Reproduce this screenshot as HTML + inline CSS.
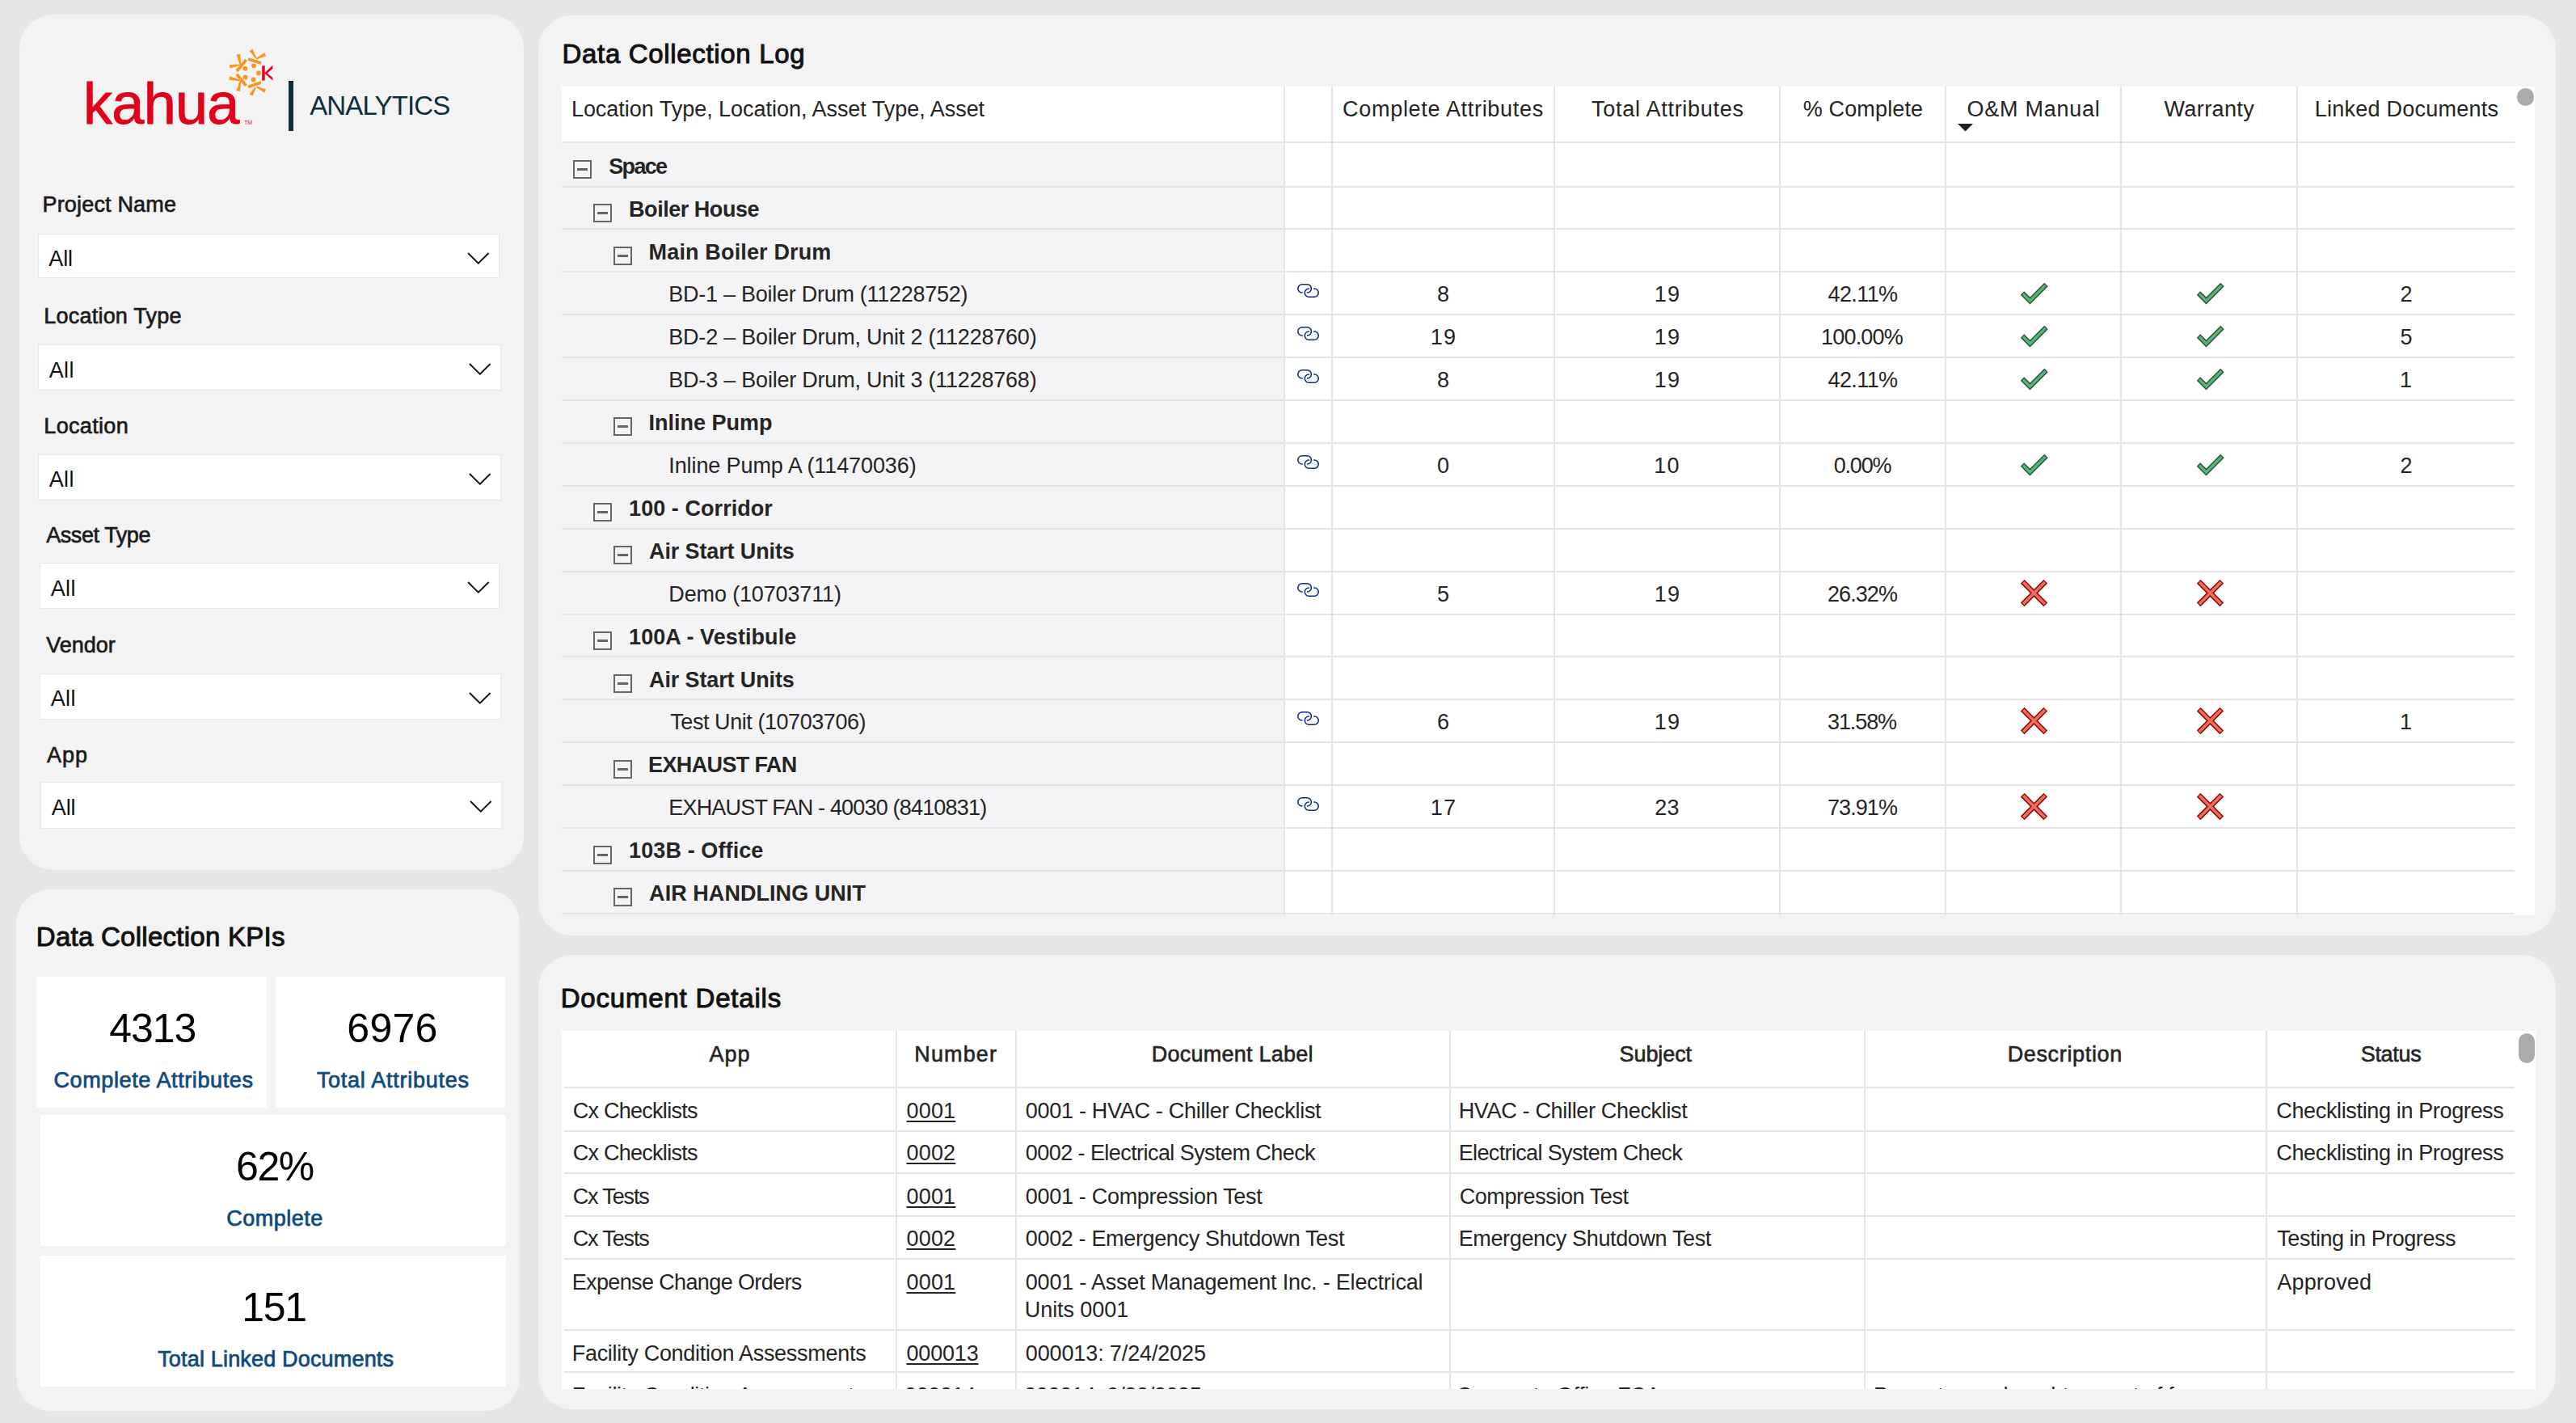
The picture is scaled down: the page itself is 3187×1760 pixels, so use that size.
<!DOCTYPE html>
<html><head><meta charset="utf-8"><title>Kahua Analytics - Data Collection</title>
<style>
html,body{margin:0;padding:0;}
body{width:3187px;height:1760px;background:#E6E6E6;position:relative;overflow:hidden;font-family:"Liberation Sans", sans-serif;}
.t{position:absolute;white-space:nowrap;}
.r{position:absolute;}
</style></head><body>
<div class="r" style="left:24.00px;top:18.00px;width:624.00px;height:1058.00px;background:#F3F3F3;border-radius:42px;"></div>
<div class="r" style="left:20.00px;top:1100.00px;width:623.00px;height:645.00px;background:#F3F3F3;border-radius:42px;"></div>
<div class="r" style="left:666.00px;top:19.00px;width:2496.00px;height:1138.00px;background:#F3F3F3;border-radius:42px;"></div>
<div class="r" style="left:666.00px;top:1181.00px;width:2496.00px;height:562.00px;background:#F3F3F3;border-radius:42px;"></div>
<div class="t" id="kahua" style="top:92.15px;font-size:72px;line-height:72px;font-weight:400;color:#E2001A;letter-spacing:-0.700px;left:103.00px;-webkit-text-stroke:0.9px #E2001A;">kahua</div>
<div class="t" style="left:302px;top:148px;font-size:7px;line-height:7px;color:#E2001A;">TM</div>
<svg class="r" style="left:280px;top:58px;width:62px;height:64px" viewBox="280 58 62 64"><line x1="307" y1="73" x2="323" y2="78" stroke="#F8961E" stroke-width="3.6"/><line x1="293" y1="88" x2="304.5" y2="74" stroke="#F8961E" stroke-width="3.6"/><line x1="293" y1="92" x2="304.5" y2="106" stroke="#F8961E" stroke-width="3.6"/><line x1="307" y1="107.5" x2="323" y2="102" stroke="#F8961E" stroke-width="3.6"/><polygon points="308.57,63.35 315.93,71.94 317.27,71.06 312.43,60.85" fill="#F8961E"/><polygon points="327.19,65.14 316.65,71.98 317.35,73.42 329.21,69.26" fill="#F8961E"/><polygon points="292.65,67.66 296.72,80.16 298.28,79.84 297.15,66.74" fill="#F8961E"/><polygon points="284.68,84.57 296.53,81.09 296.27,79.51 283.92,80.03" fill="#F8961E"/><polygon points="283.25,98.63 296.21,100.28 296.59,98.72 284.35,94.17" fill="#F8961E"/><polygon points="297.15,113.06 298.28,100.16 296.72,99.84 292.65,112.14" fill="#F8961E"/><polygon points="312.47,118.79 316.68,108.91 315.32,108.09 308.53,116.41" fill="#F8961E"/><polygon points="329.20,110.53 317.95,106.78 317.25,108.22 327.20,114.67" fill="#F8961E"/><circle cx="314" cy="81.3" r="2.9" fill="#F8961E"/><circle cx="303.5" cy="84.8" r="2.9" fill="#F8961E"/><circle cx="320" cy="90.4" r="2.9" fill="#F8961E"/><circle cx="303.5" cy="95.4" r="2.9" fill="#F8961E"/><circle cx="313.6" cy="98.4" r="2.9" fill="#F8961E"/><rect x="324.2" y="81.3" width="3.5" height="18.2" fill="#E2001A"/><path d="M327.2,90.4 L337.3,80.8 L337.3,85 L330.5,90.6 L337.3,96 L337.3,99.5 Z" fill="#E2001A"/></svg>
<div class="r" style="left:357.20px;top:100.30px;width:5.60px;height:61.70px;background:#0D2E3A;"></div>
<div class="t" id="analytics" style="top:114.27px;font-size:33px;line-height:33px;font-weight:400;color:#0B2F3C;letter-spacing:-0.866px;left:383.20px;">ANALYTICS</div>
<div class="t" id="flab0" style="top:240.14px;font-size:27px;line-height:27px;font-weight:400;color:#1A1A1A;letter-spacing:0.176px;left:52.50px;-webkit-text-stroke:0.65px #1A1A1A;">Project Name</div>
<div class="r" style="left:46.70px;top:288.70px;width:571.80px;height:55.70px;background:#FFFFFF;box-sizing:border-box;border:1px solid #E8E8E8;"></div>
<div class="t" id="fall0" style="top:307.04px;font-size:27px;line-height:27px;font-weight:400;color:#111111;letter-spacing:-0.100px;left:60.30px;">All</div>
<svg class="r" style="left:578.0px;top:310.7px;width:30px;height:18px" viewBox="0 0 30 18"><polyline points="1,2 13.8,14.6 26.6,2" fill="none" stroke="#111" stroke-width="1.9"/></svg>
<div class="t" id="flab1" style="top:378.44px;font-size:27px;line-height:27px;font-weight:400;color:#1A1A1A;letter-spacing:0.214px;left:54.30px;-webkit-text-stroke:0.65px #1A1A1A;">Location Type</div>
<div class="r" style="left:47.30px;top:426.20px;width:573.00px;height:57.20px;background:#FFFFFF;box-sizing:border-box;border:1px solid #E8E8E8;"></div>
<div class="t" id="fall1" style="top:444.54px;font-size:27px;line-height:27px;font-weight:400;color:#111111;letter-spacing:0.400px;left:60.70px;">All</div>
<svg class="r" style="left:579.8px;top:448.2px;width:30px;height:18px" viewBox="0 0 30 18"><polyline points="1,2 13.8,14.6 26.6,2" fill="none" stroke="#111" stroke-width="1.9"/></svg>
<div class="t" id="flab2" style="top:513.54px;font-size:27px;line-height:27px;font-weight:400;color:#1A1A1A;letter-spacing:0.324px;left:54.30px;-webkit-text-stroke:0.65px #1A1A1A;">Location</div>
<div class="r" style="left:47.30px;top:561.50px;width:573.00px;height:57.20px;background:#FFFFFF;box-sizing:border-box;border:1px solid #E8E8E8;"></div>
<div class="t" id="fall2" style="top:579.84px;font-size:27px;line-height:27px;font-weight:400;color:#111111;letter-spacing:0.400px;left:60.70px;">All</div>
<svg class="r" style="left:579.8px;top:583.5px;width:30px;height:18px" viewBox="0 0 30 18"><polyline points="1,2 13.8,14.6 26.6,2" fill="none" stroke="#111" stroke-width="1.9"/></svg>
<div class="t" id="flab3" style="top:648.74px;font-size:27px;line-height:27px;font-weight:400;color:#1A1A1A;letter-spacing:-0.428px;left:57.20px;-webkit-text-stroke:0.65px #1A1A1A;">Asset Type</div>
<div class="r" style="left:49.30px;top:696.20px;width:569.20px;height:56.50px;background:#FFFFFF;box-sizing:border-box;border:1px solid #E8E8E8;"></div>
<div class="t" id="fall3" style="top:714.54px;font-size:27px;line-height:27px;font-weight:400;color:#111111;letter-spacing:0.400px;left:62.70px;">All</div>
<svg class="r" style="left:578.0px;top:718.2px;width:30px;height:18px" viewBox="0 0 30 18"><polyline points="1,2 13.8,14.6 26.6,2" fill="none" stroke="#111" stroke-width="1.9"/></svg>
<div class="t" id="flab4" style="top:785.14px;font-size:27px;line-height:27px;font-weight:400;color:#1A1A1A;letter-spacing:0.020px;left:57.20px;-webkit-text-stroke:0.65px #1A1A1A;">Vendor</div>
<div class="r" style="left:49.30px;top:833.00px;width:570.70px;height:56.50px;background:#FFFFFF;box-sizing:border-box;border:1px solid #E8E8E8;"></div>
<div class="t" id="fall4" style="top:851.34px;font-size:27px;line-height:27px;font-weight:400;color:#111111;letter-spacing:0.400px;left:62.70px;">All</div>
<svg class="r" style="left:579.5px;top:855.0px;width:30px;height:18px" viewBox="0 0 30 18"><polyline points="1,2 13.8,14.6 26.6,2" fill="none" stroke="#111" stroke-width="1.9"/></svg>
<div class="t" id="flab5" style="top:920.54px;font-size:27px;line-height:27px;font-weight:400;color:#1A1A1A;letter-spacing:1.000px;left:58.00px;-webkit-text-stroke:0.65px #1A1A1A;">App</div>
<div class="r" style="left:50.20px;top:967.20px;width:571.00px;height:57.40px;background:#FFFFFF;box-sizing:border-box;border:1px solid #E8E8E8;"></div>
<div class="t" id="fall5" style="top:985.54px;font-size:27px;line-height:27px;font-weight:400;color:#111111;letter-spacing:-0.100px;left:63.80px;">All</div>
<svg class="r" style="left:580.7px;top:989.2px;width:30px;height:18px" viewBox="0 0 30 18"><polyline points="1,2 13.8,14.6 26.6,2" fill="none" stroke="#111" stroke-width="1.9"/></svg>
<div class="t" id="kpititle" style="top:1142.07px;font-size:33px;line-height:33px;font-weight:400;color:#111111;letter-spacing:0.263px;left:44.80px;-webkit-text-stroke:1.0px #111111;">Data Collection KPIs</div>
<div class="r" style="left:45.00px;top:1208.00px;width:284.60px;height:162.00px;background:#FFFFFF;"></div>
<div class="t" id="knum0" style="top:1247.17px;font-size:50px;line-height:50px;font-weight:400;color:#000000;letter-spacing:-1.032px;left:-11.30px;width:400px;text-align:center;">4313</div>
<div class="t" id="klab0" style="top:1323.14px;font-size:27px;line-height:27px;font-weight:400;color:#0F4A7E;letter-spacing:0.597px;left:-60.00px;width:500px;text-align:center;-webkit-text-stroke:0.75px #0F4A7E;">Complete Attributes</div>
<div class="r" style="left:341.00px;top:1208.00px;width:284.00px;height:162.00px;background:#FFFFFF;"></div>
<div class="t" id="knum1" style="top:1247.17px;font-size:50px;line-height:50px;font-weight:400;color:#000000;letter-spacing:0.297px;left:285.50px;width:400px;text-align:center;">6976</div>
<div class="t" id="klab1" style="top:1323.14px;font-size:27px;line-height:27px;font-weight:400;color:#0F4A7E;letter-spacing:0.734px;left:236.30px;width:500px;text-align:center;-webkit-text-stroke:0.75px #0F4A7E;">Total Attributes</div>
<div class="r" style="left:49.70px;top:1379.00px;width:576.80px;height:162.00px;background:#FFFFFF;"></div>
<div class="t" id="knum2" style="top:1418.17px;font-size:50px;line-height:50px;font-weight:400;color:#000000;letter-spacing:-1.500px;left:139.90px;width:400px;text-align:center;">62%</div>
<div class="t" id="klab2" style="top:1494.14px;font-size:27px;line-height:27px;font-weight:400;color:#0F4A7E;letter-spacing:0.509px;left:90.00px;width:500px;text-align:center;-webkit-text-stroke:0.75px #0F4A7E;">Complete</div>
<div class="r" style="left:49.70px;top:1553.00px;width:576.80px;height:162.00px;background:#FFFFFF;"></div>
<div class="t" id="knum3" style="top:1592.17px;font-size:50px;line-height:50px;font-weight:400;color:#000000;letter-spacing:-1.300px;left:138.90px;width:400px;text-align:center;">151</div>
<div class="t" id="klab3" style="top:1668.14px;font-size:27px;line-height:27px;font-weight:400;color:#0F4A7E;letter-spacing:0.176px;left:91.20px;width:500px;text-align:center;-webkit-text-stroke:0.75px #0F4A7E;">Total Linked Documents</div>
<div class="t" id="logtitle" style="top:50.07px;font-size:33px;line-height:33px;font-weight:400;color:#111111;letter-spacing:0.667px;left:695.60px;-webkit-text-stroke:1.0px #111111;">Data Collection Log</div>
<div class="r" style="left:695.00px;top:107.00px;width:2441.00px;height:68.00px;background:#FFFFFF;"></div>
<div class="r" style="left:695.00px;top:175.00px;width:2441.00px;height:956.50px;background:#FFFFFF;"></div>
<div class="r" style="left:695.00px;top:175.00px;width:893.00px;height:956.50px;background:#F4F4F6;"></div>
<div class="t" id="h0" style="top:121.94px;font-size:27px;line-height:27px;font-weight:400;color:#252423;letter-spacing:-0.027px;left:706.90px;">Location Type, Location, Asset Type, Asset</div>
<div class="t" id="h2" style="top:121.94px;font-size:27px;line-height:27px;font-weight:400;color:#252423;letter-spacing:0.692px;left:1585.50px;width:400px;text-align:center;">Complete Attributes</div>
<div class="t" id="h3" style="top:121.94px;font-size:27px;line-height:27px;font-weight:400;color:#252423;letter-spacing:0.730px;left:1863.40px;width:400px;text-align:center;">Total Attributes</div>
<div class="t" id="h4" style="top:121.94px;font-size:27px;line-height:27px;font-weight:400;color:#252423;letter-spacing:0.150px;left:2105.00px;width:400px;text-align:center;">% Complete</div>
<div class="t" id="h5" style="top:121.94px;font-size:27px;line-height:27px;font-weight:400;color:#252423;letter-spacing:0.760px;left:2316.00px;width:400px;text-align:center;">O&amp;M Manual</div>
<div class="t" id="h6" style="top:121.94px;font-size:27px;line-height:27px;font-weight:400;color:#252423;letter-spacing:0.392px;left:2533.30px;width:400px;text-align:center;">Warranty</div>
<div class="t" id="h7" style="top:121.94px;font-size:27px;line-height:27px;font-weight:400;color:#252423;letter-spacing:0.233px;left:2777.50px;width:400px;text-align:center;">Linked Documents</div>
<svg class="r" style="left:2422px;top:153.2px;width:19px;height:10px" viewBox="0 0 19 10"><polygon points="0,0 19,0 9.5,9.5" fill="#222"/></svg>
<div class="r" style="left:3113.50px;top:108.50px;width:21.00px;height:22.00px;background:#ABABAB;border-radius:11px;"></div>
<div class="r" style="left:709.00px;top:198.00px;width:23.00px;height:23.00px;background:transparent;box-sizing:border-box;border:2.6px solid #666666;"></div>
<div class="r" style="left:714.00px;top:208.00px;width:12.60px;height:2.70px;background:#666666;"></div>
<div class="t" id="rg0" style="top:192.64px;font-size:27px;line-height:27px;font-weight:700;color:#252423;letter-spacing:-1.700px;left:753.30px;">Space</div>
<div class="r" style="left:734.00px;top:252.00px;width:23.00px;height:23.00px;background:transparent;box-sizing:border-box;border:2.6px solid #666666;"></div>
<div class="r" style="left:739.00px;top:262.00px;width:12.60px;height:2.70px;background:#666666;"></div>
<div class="t" id="rg1" style="top:245.64px;font-size:27px;line-height:27px;font-weight:700;color:#252423;letter-spacing:-0.469px;left:778.10px;">Boiler House</div>
<div class="r" style="left:759.00px;top:305.00px;width:23.00px;height:23.00px;background:transparent;box-sizing:border-box;border:2.6px solid #666666;"></div>
<div class="r" style="left:764.00px;top:315.00px;width:12.60px;height:2.70px;background:#666666;"></div>
<div class="t" id="rg2" style="top:298.54px;font-size:27px;line-height:27px;font-weight:700;color:#252423;letter-spacing:0.150px;left:802.60px;">Main Boiler Drum</div>
<div class="t" id="rl3" style="top:351.44px;font-size:27px;line-height:27px;font-weight:400;color:#252423;letter-spacing:-0.263px;left:827.30px;">BD-1 – Boiler Drum (11228752)</div>
<svg class="r" style="left:1604px;top:350.0px;width:30px;height:20px" viewBox="0 0 30 20"><path d="M7.6,12 H6.9 A5.1,5.1 0 0 1 6.9,1.8 H13.3 A5.1,5.1 0 0 1 13.3,12 H12.9" fill="none" stroke="#0D2A8C" stroke-width="1.6"/><path d="M15.9,7 H15.3 A5.1,5.1 0 0 0 15.3,17.2 H22.1 A5.1,5.1 0 0 0 22.1,7 H21.1" fill="none" stroke="#0D2A8C" stroke-width="1.6"/></svg>
<div class="t" id="v3_0" style="top:351.44px;font-size:27px;line-height:27px;font-weight:400;color:#252423;letter-spacing:0.200px;left:1655.50px;width:260px;text-align:center;">8</div>
<div class="t" id="v3_1" style="top:351.44px;font-size:27px;line-height:27px;font-weight:400;color:#252423;letter-spacing:1.200px;left:1933.00px;width:260px;text-align:center;">19</div>
<div class="t" id="v3_2" style="top:351.44px;font-size:27px;line-height:27px;font-weight:400;color:#252423;letter-spacing:-0.600px;left:2174.50px;width:260px;text-align:center;">42.11%</div>
<svg class="r" style="left:2498.0px;top:347.3px;width:40px;height:34px" viewBox="0 0 40 34"><polyline points="4,15.5 13.5,25 33.5,5" fill="none" stroke="#1E5631" stroke-width="6.2" stroke-linejoin="miter"/><polyline points="4.9,16.4 13.5,25 32.6,5.9" fill="none" stroke="#5FB27C" stroke-width="3.4" stroke-linejoin="miter"/></svg>
<svg class="r" style="left:2715.5px;top:347.3px;width:40px;height:34px" viewBox="0 0 40 34"><polyline points="4,15.5 13.5,25 33.5,5" fill="none" stroke="#1E5631" stroke-width="6.2" stroke-linejoin="miter"/><polyline points="4.9,16.4 13.5,25 32.6,5.9" fill="none" stroke="#5FB27C" stroke-width="3.4" stroke-linejoin="miter"/></svg>
<div class="t" id="v3_3" style="top:351.44px;font-size:27px;line-height:27px;font-weight:400;color:#252423;letter-spacing:0.200px;left:2847.00px;width:260px;text-align:center;">2</div>
<div class="t" id="rl4" style="top:404.34px;font-size:27px;line-height:27px;font-weight:400;color:#252423;letter-spacing:-0.219px;left:827.30px;">BD-2 – Boiler Drum, Unit 2 (11228760)</div>
<svg class="r" style="left:1604px;top:402.9px;width:30px;height:20px" viewBox="0 0 30 20"><path d="M7.6,12 H6.9 A5.1,5.1 0 0 1 6.9,1.8 H13.3 A5.1,5.1 0 0 1 13.3,12 H12.9" fill="none" stroke="#0D2A8C" stroke-width="1.6"/><path d="M15.9,7 H15.3 A5.1,5.1 0 0 0 15.3,17.2 H22.1 A5.1,5.1 0 0 0 22.1,7 H21.1" fill="none" stroke="#0D2A8C" stroke-width="1.6"/></svg>
<div class="t" id="v4_0" style="top:404.34px;font-size:27px;line-height:27px;font-weight:400;color:#252423;letter-spacing:1.200px;left:1656.00px;width:260px;text-align:center;">19</div>
<div class="t" id="v4_1" style="top:404.34px;font-size:27px;line-height:27px;font-weight:400;color:#252423;letter-spacing:1.200px;left:1933.00px;width:260px;text-align:center;">19</div>
<div class="t" id="v4_2" style="top:404.34px;font-size:27px;line-height:27px;font-weight:400;color:#252423;letter-spacing:-0.800px;left:2173.50px;width:260px;text-align:center;">100.00%</div>
<svg class="r" style="left:2498.0px;top:400.2px;width:40px;height:34px" viewBox="0 0 40 34"><polyline points="4,15.5 13.5,25 33.5,5" fill="none" stroke="#1E5631" stroke-width="6.2" stroke-linejoin="miter"/><polyline points="4.9,16.4 13.5,25 32.6,5.9" fill="none" stroke="#5FB27C" stroke-width="3.4" stroke-linejoin="miter"/></svg>
<svg class="r" style="left:2715.5px;top:400.2px;width:40px;height:34px" viewBox="0 0 40 34"><polyline points="4,15.5 13.5,25 33.5,5" fill="none" stroke="#1E5631" stroke-width="6.2" stroke-linejoin="miter"/><polyline points="4.9,16.4 13.5,25 32.6,5.9" fill="none" stroke="#5FB27C" stroke-width="3.4" stroke-linejoin="miter"/></svg>
<div class="t" id="v4_3" style="top:404.34px;font-size:27px;line-height:27px;font-weight:400;color:#252423;letter-spacing:0.200px;left:2847.00px;width:260px;text-align:center;">5</div>
<div class="t" id="rl5" style="top:457.24px;font-size:27px;line-height:27px;font-weight:400;color:#252423;letter-spacing:-0.219px;left:827.30px;">BD-3 – Boiler Drum, Unit 3 (11228768)</div>
<svg class="r" style="left:1604px;top:455.8px;width:30px;height:20px" viewBox="0 0 30 20"><path d="M7.6,12 H6.9 A5.1,5.1 0 0 1 6.9,1.8 H13.3 A5.1,5.1 0 0 1 13.3,12 H12.9" fill="none" stroke="#0D2A8C" stroke-width="1.6"/><path d="M15.9,7 H15.3 A5.1,5.1 0 0 0 15.3,17.2 H22.1 A5.1,5.1 0 0 0 22.1,7 H21.1" fill="none" stroke="#0D2A8C" stroke-width="1.6"/></svg>
<div class="t" id="v5_0" style="top:457.24px;font-size:27px;line-height:27px;font-weight:400;color:#252423;letter-spacing:0.200px;left:1655.50px;width:260px;text-align:center;">8</div>
<div class="t" id="v5_1" style="top:457.24px;font-size:27px;line-height:27px;font-weight:400;color:#252423;letter-spacing:1.200px;left:1933.00px;width:260px;text-align:center;">19</div>
<div class="t" id="v5_2" style="top:457.24px;font-size:27px;line-height:27px;font-weight:400;color:#252423;letter-spacing:-0.600px;left:2174.50px;width:260px;text-align:center;">42.11%</div>
<svg class="r" style="left:2498.0px;top:453.1px;width:40px;height:34px" viewBox="0 0 40 34"><polyline points="4,15.5 13.5,25 33.5,5" fill="none" stroke="#1E5631" stroke-width="6.2" stroke-linejoin="miter"/><polyline points="4.9,16.4 13.5,25 32.6,5.9" fill="none" stroke="#5FB27C" stroke-width="3.4" stroke-linejoin="miter"/></svg>
<svg class="r" style="left:2715.5px;top:453.1px;width:40px;height:34px" viewBox="0 0 40 34"><polyline points="4,15.5 13.5,25 33.5,5" fill="none" stroke="#1E5631" stroke-width="6.2" stroke-linejoin="miter"/><polyline points="4.9,16.4 13.5,25 32.6,5.9" fill="none" stroke="#5FB27C" stroke-width="3.4" stroke-linejoin="miter"/></svg>
<div class="t" id="v5_3" style="top:457.24px;font-size:27px;line-height:27px;font-weight:400;color:#252423;letter-spacing:0.200px;left:2846.50px;width:260px;text-align:center;">1</div>
<div class="r" style="left:759.00px;top:516.00px;width:23.00px;height:23.00px;background:transparent;box-sizing:border-box;border:2.6px solid #666666;"></div>
<div class="r" style="left:764.00px;top:526.00px;width:12.60px;height:2.70px;background:#666666;"></div>
<div class="t" id="rg6" style="top:510.14px;font-size:27px;line-height:27px;font-weight:700;color:#252423;letter-spacing:-0.020px;left:802.60px;">Inline Pump</div>
<div class="t" id="rl7" style="top:563.04px;font-size:27px;line-height:27px;font-weight:400;color:#252423;letter-spacing:-0.104px;left:827.30px;">Inline Pump A (11470036)</div>
<svg class="r" style="left:1604px;top:561.6px;width:30px;height:20px" viewBox="0 0 30 20"><path d="M7.6,12 H6.9 A5.1,5.1 0 0 1 6.9,1.8 H13.3 A5.1,5.1 0 0 1 13.3,12 H12.9" fill="none" stroke="#0D2A8C" stroke-width="1.6"/><path d="M15.9,7 H15.3 A5.1,5.1 0 0 0 15.3,17.2 H22.1 A5.1,5.1 0 0 0 22.1,7 H21.1" fill="none" stroke="#0D2A8C" stroke-width="1.6"/></svg>
<div class="t" id="v7_0" style="top:563.04px;font-size:27px;line-height:27px;font-weight:400;color:#252423;letter-spacing:0.200px;left:1655.50px;width:260px;text-align:center;">0</div>
<div class="t" id="v7_1" style="top:563.04px;font-size:27px;line-height:27px;font-weight:400;color:#252423;letter-spacing:1.200px;left:1932.50px;width:260px;text-align:center;">10</div>
<div class="t" id="v7_2" style="top:563.04px;font-size:27px;line-height:27px;font-weight:400;color:#252423;letter-spacing:-1.175px;left:2174.00px;width:260px;text-align:center;">0.00%</div>
<svg class="r" style="left:2498.0px;top:558.9px;width:40px;height:34px" viewBox="0 0 40 34"><polyline points="4,15.5 13.5,25 33.5,5" fill="none" stroke="#1E5631" stroke-width="6.2" stroke-linejoin="miter"/><polyline points="4.9,16.4 13.5,25 32.6,5.9" fill="none" stroke="#5FB27C" stroke-width="3.4" stroke-linejoin="miter"/></svg>
<svg class="r" style="left:2715.5px;top:558.9px;width:40px;height:34px" viewBox="0 0 40 34"><polyline points="4,15.5 13.5,25 33.5,5" fill="none" stroke="#1E5631" stroke-width="6.2" stroke-linejoin="miter"/><polyline points="4.9,16.4 13.5,25 32.6,5.9" fill="none" stroke="#5FB27C" stroke-width="3.4" stroke-linejoin="miter"/></svg>
<div class="t" id="v7_3" style="top:563.04px;font-size:27px;line-height:27px;font-weight:400;color:#252423;letter-spacing:0.200px;left:2847.00px;width:260px;text-align:center;">2</div>
<div class="r" style="left:734.00px;top:622.00px;width:23.00px;height:23.00px;background:transparent;box-sizing:border-box;border:2.6px solid #666666;"></div>
<div class="r" style="left:739.00px;top:632.00px;width:12.60px;height:2.70px;background:#666666;"></div>
<div class="t" id="rg8" style="top:615.94px;font-size:27px;line-height:27px;font-weight:700;color:#252423;letter-spacing:0.056px;left:778.10px;">100 - Corridor</div>
<div class="r" style="left:759.00px;top:675.00px;width:23.00px;height:23.00px;background:transparent;box-sizing:border-box;border:2.6px solid #666666;"></div>
<div class="r" style="left:764.00px;top:685.00px;width:12.60px;height:2.70px;background:#666666;"></div>
<div class="t" id="rg9" style="top:668.84px;font-size:27px;line-height:27px;font-weight:700;color:#252423;letter-spacing:-0.133px;left:803.10px;">Air Start Units</div>
<div class="t" id="rl10" style="top:721.74px;font-size:27px;line-height:27px;font-weight:400;color:#252423;letter-spacing:-0.139px;left:827.30px;">Demo (10703711)</div>
<svg class="r" style="left:1604px;top:720.3px;width:30px;height:20px" viewBox="0 0 30 20"><path d="M7.6,12 H6.9 A5.1,5.1 0 0 1 6.9,1.8 H13.3 A5.1,5.1 0 0 1 13.3,12 H12.9" fill="none" stroke="#0D2A8C" stroke-width="1.6"/><path d="M15.9,7 H15.3 A5.1,5.1 0 0 0 15.3,17.2 H22.1 A5.1,5.1 0 0 0 22.1,7 H21.1" fill="none" stroke="#0D2A8C" stroke-width="1.6"/></svg>
<div class="t" id="v10_0" style="top:721.74px;font-size:27px;line-height:27px;font-weight:400;color:#252423;letter-spacing:0.200px;left:1655.50px;width:260px;text-align:center;">5</div>
<div class="t" id="v10_1" style="top:721.74px;font-size:27px;line-height:27px;font-weight:400;color:#252423;letter-spacing:1.200px;left:1933.00px;width:260px;text-align:center;">19</div>
<div class="t" id="v10_2" style="top:721.74px;font-size:27px;line-height:27px;font-weight:400;color:#252423;letter-spacing:-0.900px;left:2174.00px;width:260px;text-align:center;">26.32%</div>
<svg class="r" style="left:2500.0px;top:716.7px;width:34px;height:34px" viewBox="0 0 34 34"><path d="M2.2,2.2 L30.8,30.8 M30.8,2.2 L2.2,30.8" fill="none" stroke="#8A0C04" stroke-width="6.6"/><path d="M3.1,3.1 L29.9,29.9 M29.9,3.1 L3.1,29.9" fill="none" stroke="#F36B5F" stroke-width="3.6"/></svg>
<svg class="r" style="left:2717.5px;top:716.7px;width:34px;height:34px" viewBox="0 0 34 34"><path d="M2.2,2.2 L30.8,30.8 M30.8,2.2 L2.2,30.8" fill="none" stroke="#8A0C04" stroke-width="6.6"/><path d="M3.1,3.1 L29.9,29.9 M29.9,3.1 L3.1,29.9" fill="none" stroke="#F36B5F" stroke-width="3.6"/></svg>
<div class="r" style="left:734.00px;top:781.00px;width:23.00px;height:23.00px;background:transparent;box-sizing:border-box;border:2.6px solid #666666;"></div>
<div class="r" style="left:739.00px;top:791.00px;width:12.60px;height:2.70px;background:#666666;"></div>
<div class="t" id="rg11" style="top:774.64px;font-size:27px;line-height:27px;font-weight:700;color:#252423;letter-spacing:0.070px;left:778.10px;">100A - Vestibule</div>
<div class="r" style="left:759.00px;top:834.00px;width:23.00px;height:23.00px;background:transparent;box-sizing:border-box;border:2.6px solid #666666;"></div>
<div class="r" style="left:764.00px;top:844.00px;width:12.60px;height:2.70px;background:#666666;"></div>
<div class="t" id="rg12" style="top:827.54px;font-size:27px;line-height:27px;font-weight:700;color:#252423;letter-spacing:-0.133px;left:803.10px;">Air Start Units</div>
<div class="t" id="rl13" style="top:880.44px;font-size:27px;line-height:27px;font-weight:400;color:#252423;letter-spacing:-0.441px;left:829.30px;">Test Unit (10703706)</div>
<svg class="r" style="left:1604px;top:879.0px;width:30px;height:20px" viewBox="0 0 30 20"><path d="M7.6,12 H6.9 A5.1,5.1 0 0 1 6.9,1.8 H13.3 A5.1,5.1 0 0 1 13.3,12 H12.9" fill="none" stroke="#0D2A8C" stroke-width="1.6"/><path d="M15.9,7 H15.3 A5.1,5.1 0 0 0 15.3,17.2 H22.1 A5.1,5.1 0 0 0 22.1,7 H21.1" fill="none" stroke="#0D2A8C" stroke-width="1.6"/></svg>
<div class="t" id="v13_0" style="top:880.44px;font-size:27px;line-height:27px;font-weight:400;color:#252423;letter-spacing:0.200px;left:1655.50px;width:260px;text-align:center;">6</div>
<div class="t" id="v13_1" style="top:880.44px;font-size:27px;line-height:27px;font-weight:400;color:#252423;letter-spacing:1.200px;left:1933.00px;width:260px;text-align:center;">19</div>
<div class="t" id="v13_2" style="top:880.44px;font-size:27px;line-height:27px;font-weight:400;color:#252423;letter-spacing:-1.100px;left:2173.50px;width:260px;text-align:center;">31.58%</div>
<svg class="r" style="left:2500.0px;top:875.4px;width:34px;height:34px" viewBox="0 0 34 34"><path d="M2.2,2.2 L30.8,30.8 M30.8,2.2 L2.2,30.8" fill="none" stroke="#8A0C04" stroke-width="6.6"/><path d="M3.1,3.1 L29.9,29.9 M29.9,3.1 L3.1,29.9" fill="none" stroke="#F36B5F" stroke-width="3.6"/></svg>
<svg class="r" style="left:2717.5px;top:875.4px;width:34px;height:34px" viewBox="0 0 34 34"><path d="M2.2,2.2 L30.8,30.8 M30.8,2.2 L2.2,30.8" fill="none" stroke="#8A0C04" stroke-width="6.6"/><path d="M3.1,3.1 L29.9,29.9 M29.9,3.1 L3.1,29.9" fill="none" stroke="#F36B5F" stroke-width="3.6"/></svg>
<div class="t" id="v13_3" style="top:880.44px;font-size:27px;line-height:27px;font-weight:400;color:#252423;letter-spacing:0.200px;left:2846.50px;width:260px;text-align:center;">1</div>
<div class="r" style="left:759.00px;top:940.00px;width:23.00px;height:23.00px;background:transparent;box-sizing:border-box;border:2.6px solid #666666;"></div>
<div class="r" style="left:764.00px;top:950.00px;width:12.60px;height:2.70px;background:#666666;"></div>
<div class="t" id="rg14" style="top:933.34px;font-size:27px;line-height:27px;font-weight:700;color:#252423;letter-spacing:-0.640px;left:802.10px;">EXHAUST FAN</div>
<div class="t" id="rl15" style="top:986.24px;font-size:27px;line-height:27px;font-weight:400;color:#252423;letter-spacing:-0.817px;left:827.30px;">EXHAUST FAN - 40030 (8410831)</div>
<svg class="r" style="left:1604px;top:984.8px;width:30px;height:20px" viewBox="0 0 30 20"><path d="M7.6,12 H6.9 A5.1,5.1 0 0 1 6.9,1.8 H13.3 A5.1,5.1 0 0 1 13.3,12 H12.9" fill="none" stroke="#0D2A8C" stroke-width="1.6"/><path d="M15.9,7 H15.3 A5.1,5.1 0 0 0 15.3,17.2 H22.1 A5.1,5.1 0 0 0 22.1,7 H21.1" fill="none" stroke="#0D2A8C" stroke-width="1.6"/></svg>
<div class="t" id="v15_0" style="top:986.24px;font-size:27px;line-height:27px;font-weight:400;color:#252423;letter-spacing:1.200px;left:1656.00px;width:260px;text-align:center;">17</div>
<div class="t" id="v15_1" style="top:986.24px;font-size:27px;line-height:27px;font-weight:400;color:#252423;letter-spacing:0.200px;left:1932.50px;width:260px;text-align:center;">23</div>
<div class="t" id="v15_2" style="top:986.24px;font-size:27px;line-height:27px;font-weight:400;color:#252423;letter-spacing:-0.900px;left:2174.00px;width:260px;text-align:center;">73.91%</div>
<svg class="r" style="left:2500.0px;top:981.2px;width:34px;height:34px" viewBox="0 0 34 34"><path d="M2.2,2.2 L30.8,30.8 M30.8,2.2 L2.2,30.8" fill="none" stroke="#8A0C04" stroke-width="6.6"/><path d="M3.1,3.1 L29.9,29.9 M29.9,3.1 L3.1,29.9" fill="none" stroke="#F36B5F" stroke-width="3.6"/></svg>
<svg class="r" style="left:2717.5px;top:981.2px;width:34px;height:34px" viewBox="0 0 34 34"><path d="M2.2,2.2 L30.8,30.8 M30.8,2.2 L2.2,30.8" fill="none" stroke="#8A0C04" stroke-width="6.6"/><path d="M3.1,3.1 L29.9,29.9 M29.9,3.1 L3.1,29.9" fill="none" stroke="#F36B5F" stroke-width="3.6"/></svg>
<div class="r" style="left:734.00px;top:1046.00px;width:23.00px;height:23.00px;background:transparent;box-sizing:border-box;border:2.6px solid #666666;"></div>
<div class="r" style="left:739.00px;top:1056.00px;width:12.60px;height:2.70px;background:#666666;"></div>
<div class="t" id="rg16" style="top:1039.14px;font-size:27px;line-height:27px;font-weight:700;color:#252423;letter-spacing:0.103px;left:778.10px;">103B - Office</div>
<div class="r" style="left:759.00px;top:1098.00px;width:23.00px;height:23.00px;background:transparent;box-sizing:border-box;border:2.6px solid #666666;"></div>
<div class="r" style="left:764.00px;top:1108.00px;width:12.60px;height:2.70px;background:#666666;"></div>
<div class="t" id="rg17" style="top:1092.04px;font-size:27px;line-height:27px;font-weight:700;color:#252423;letter-spacing:0.050px;left:803.10px;">AIR HANDLING UNIT</div>
<div class="r" style="left:695px;top:175px;width:2416px;height:2px;background:#E4E4E4"></div>
<div class="r" style="left:695px;top:229.5px;width:2416px;height:2px;background:#E4E4E4"></div>
<div class="r" style="left:695px;top:282.4px;width:2416px;height:2px;background:#E4E4E4"></div>
<div class="r" style="left:695px;top:335.3px;width:2416px;height:2px;background:#E4E4E4"></div>
<div class="r" style="left:695px;top:388.2px;width:2416px;height:2px;background:#E4E4E4"></div>
<div class="r" style="left:695px;top:441.1px;width:2416px;height:2px;background:#E4E4E4"></div>
<div class="r" style="left:695px;top:494.0px;width:2416px;height:2px;background:#E4E4E4"></div>
<div class="r" style="left:695px;top:546.9px;width:2416px;height:2px;background:#E4E4E4"></div>
<div class="r" style="left:695px;top:599.8px;width:2416px;height:2px;background:#E4E4E4"></div>
<div class="r" style="left:695px;top:652.7px;width:2416px;height:2px;background:#E4E4E4"></div>
<div class="r" style="left:695px;top:705.6px;width:2416px;height:2px;background:#E4E4E4"></div>
<div class="r" style="left:695px;top:758.5px;width:2416px;height:2px;background:#E4E4E4"></div>
<div class="r" style="left:695px;top:811.4px;width:2416px;height:2px;background:#E4E4E4"></div>
<div class="r" style="left:695px;top:864.3px;width:2416px;height:2px;background:#E4E4E4"></div>
<div class="r" style="left:695px;top:917.2px;width:2416px;height:2px;background:#E4E4E4"></div>
<div class="r" style="left:695px;top:970.1px;width:2416px;height:2px;background:#E4E4E4"></div>
<div class="r" style="left:695px;top:1023.0px;width:2416px;height:2px;background:#E4E4E4"></div>
<div class="r" style="left:695px;top:1075.9px;width:2416px;height:2px;background:#E4E4E4"></div>
<div class="r" style="left:695px;top:1128.8px;width:2416px;height:2px;background:#E4E4E4"></div>
<div class="r" style="left:1588px;top:107px;width:2px;height:1024.5px;background:#E4E4E4"></div>
<div class="r" style="left:1647px;top:107px;width:2px;height:1024.5px;background:#E4E4E4"></div>
<div class="r" style="left:1922px;top:107px;width:2px;height:1024.5px;background:#E4E4E4"></div>
<div class="r" style="left:2201px;top:107px;width:2px;height:1024.5px;background:#E4E4E4"></div>
<div class="r" style="left:2406px;top:107px;width:2px;height:1024.5px;background:#E4E4E4"></div>
<div class="r" style="left:2623px;top:107px;width:2px;height:1024.5px;background:#E4E4E4"></div>
<div class="r" style="left:2841px;top:107px;width:2px;height:1024.5px;background:#E4E4E4"></div>
<div class="t" id="doctitle" style="top:1218.27px;font-size:33px;line-height:33px;font-weight:400;color:#111111;letter-spacing:0.808px;left:693.70px;-webkit-text-stroke:1.0px #111111;">Document Details</div>
<div class="r" style="left:695.00px;top:1275.00px;width:2442.00px;height:442.50px;background:#FFFFFF;"></div>
<div class="r" style="left:3115.50px;top:1277.50px;width:20.00px;height:37.00px;background:#ABABAB;border-radius:10px;"></div>
<div class="t" id="dh0" style="top:1290.94px;font-size:27px;line-height:27px;font-weight:400;color:#252423;letter-spacing:1.000px;left:703.00px;width:400px;text-align:center;-webkit-text-stroke:0.6px #252423;">App</div>
<div class="t" id="dh1" style="top:1290.94px;font-size:27px;line-height:27px;font-weight:400;color:#252423;letter-spacing:1.120px;left:982.70px;width:400px;text-align:center;-webkit-text-stroke:0.6px #252423;">Number</div>
<div class="t" id="dh2" style="top:1290.94px;font-size:27px;line-height:27px;font-weight:400;color:#252423;letter-spacing:0.246px;left:1324.80px;width:400px;text-align:center;-webkit-text-stroke:0.6px #252423;">Document Label</div>
<div class="t" id="dh3" style="top:1290.94px;font-size:27px;line-height:27px;font-weight:400;color:#252423;letter-spacing:-0.100px;left:1848.30px;width:400px;text-align:center;-webkit-text-stroke:0.6px #252423;">Subject</div>
<div class="t" id="dh4" style="top:1290.94px;font-size:27px;line-height:27px;font-weight:400;color:#252423;letter-spacing:0.660px;left:2354.80px;width:400px;text-align:center;-webkit-text-stroke:0.6px #252423;">Description</div>
<div class="t" id="dh5" style="top:1290.94px;font-size:27px;line-height:27px;font-weight:400;color:#252423;letter-spacing:-0.280px;left:2758.10px;width:400px;text-align:center;-webkit-text-stroke:0.6px #252423;">Status</div>
<div class="r" style="left:698px;top:1344px;width:2413px;height:2px;background:#E4E4E4"></div>
<div class="r" style="left:0;top:0;width:3187px;height:1717.5px;overflow:hidden">
<div class="t" id="d0_0" style="top:1361.14px;font-size:27px;line-height:27px;font-weight:400;color:#252423;letter-spacing:-0.732px;left:708.70px;">Cx Checklists</div>
<div class="t" id="d0_1" style="top:1361.14px;font-size:27px;line-height:27px;font-weight:400;color:#252423;letter-spacing:0.185px;left:1121.50px;text-decoration:underline;text-underline-offset:3px;text-decoration-thickness:1.5px;">0001</div>
<div class="t" id="d0_2" style="top:1361.14px;font-size:27px;line-height:27px;font-weight:400;color:#252423;letter-spacing:-0.293px;left:1268.80px;">0001 - HVAC - Chiller Checklist</div>
<div class="t" id="d0_3" style="top:1361.14px;font-size:27px;line-height:27px;font-weight:400;color:#252423;letter-spacing:-0.324px;left:1804.70px;">HVAC - Chiller Checklist</div>
<div class="t" id="d0_5" style="top:1361.14px;font-size:27px;line-height:27px;font-weight:400;color:#252423;letter-spacing:-0.355px;left:2816.30px;">Checklisting in Progress</div>
<div class="t" id="d1_0" style="top:1412.74px;font-size:27px;line-height:27px;font-weight:400;color:#252423;letter-spacing:-0.732px;left:708.70px;">Cx Checklists</div>
<div class="t" id="d1_1" style="top:1412.74px;font-size:27px;line-height:27px;font-weight:400;color:#252423;letter-spacing:0.185px;left:1121.50px;text-decoration:underline;text-underline-offset:3px;text-decoration-thickness:1.5px;">0002</div>
<div class="t" id="d1_2" style="top:1412.74px;font-size:27px;line-height:27px;font-weight:400;color:#252423;letter-spacing:-0.564px;left:1268.80px;">0002 - Electrical System Check</div>
<div class="t" id="d1_3" style="top:1412.74px;font-size:27px;line-height:27px;font-weight:400;color:#252423;letter-spacing:-0.638px;left:1804.70px;">Electrical System Check</div>
<div class="t" id="d1_5" style="top:1412.74px;font-size:27px;line-height:27px;font-weight:400;color:#252423;letter-spacing:-0.355px;left:2816.30px;">Checklisting in Progress</div>
<div class="t" id="d2_0" style="top:1467.34px;font-size:27px;line-height:27px;font-weight:400;color:#252423;letter-spacing:-1.123px;left:708.70px;">Cx Tests</div>
<div class="t" id="d2_1" style="top:1467.34px;font-size:27px;line-height:27px;font-weight:400;color:#252423;letter-spacing:0.185px;left:1121.50px;text-decoration:underline;text-underline-offset:3px;text-decoration-thickness:1.5px;">0001</div>
<div class="t" id="d2_2" style="top:1467.34px;font-size:27px;line-height:27px;font-weight:400;color:#252423;letter-spacing:-0.305px;left:1268.80px;">0001 - Compression Test</div>
<div class="t" id="d2_3" style="top:1467.34px;font-size:27px;line-height:27px;font-weight:400;color:#252423;letter-spacing:-0.417px;left:1805.70px;">Compression Test</div>
<div class="t" id="d3_0" style="top:1519.14px;font-size:27px;line-height:27px;font-weight:400;color:#252423;letter-spacing:-1.123px;left:708.70px;">Cx Tests</div>
<div class="t" id="d3_1" style="top:1519.14px;font-size:27px;line-height:27px;font-weight:400;color:#252423;letter-spacing:0.185px;left:1121.50px;text-decoration:underline;text-underline-offset:3px;text-decoration-thickness:1.5px;">0002</div>
<div class="t" id="d3_2" style="top:1519.14px;font-size:27px;line-height:27px;font-weight:400;color:#252423;letter-spacing:-0.348px;left:1268.80px;">0002 - Emergency Shutdown Test</div>
<div class="t" id="d3_3" style="top:1519.14px;font-size:27px;line-height:27px;font-weight:400;color:#252423;letter-spacing:-0.366px;left:1804.70px;">Emergency Shutdown Test</div>
<div class="t" id="d3_5" style="top:1519.14px;font-size:27px;line-height:27px;font-weight:400;color:#252423;letter-spacing:-0.469px;left:2817.30px;">Testing in Progress</div>
<div class="t" id="d4_0" style="top:1572.94px;font-size:27px;line-height:27px;font-weight:400;color:#252423;letter-spacing:-0.630px;left:707.70px;">Expense Change Orders</div>
<div class="t" id="d4_1" style="top:1572.94px;font-size:27px;line-height:27px;font-weight:400;color:#252423;letter-spacing:0.185px;left:1121.50px;text-decoration:underline;text-underline-offset:3px;text-decoration-thickness:1.5px;">0001</div>
<div class="t" id="d4_2" style="top:1572.94px;font-size:27px;line-height:27px;font-weight:400;color:#252423;letter-spacing:-0.200px;left:1268.80px;">0001 - Asset Management Inc. - Electrical</div>
<div class="t" id="d4_2b" style="top:1606.94px;font-size:27px;line-height:27px;font-weight:400;color:#252423;letter-spacing:-0.080px;left:1267.80px;">Units 0001</div>
<div class="t" id="d4_5" style="top:1572.94px;font-size:27px;line-height:27px;font-weight:400;color:#252423;letter-spacing:0.163px;left:2817.30px;">Approved</div>
<div class="t" id="d5_0" style="top:1660.74px;font-size:27px;line-height:27px;font-weight:400;color:#252423;letter-spacing:-0.281px;left:707.70px;">Facility Condition Assessments</div>
<div class="t" id="d5_1" style="top:1660.74px;font-size:27px;line-height:27px;font-weight:400;color:#252423;letter-spacing:-0.190px;left:1121.50px;text-decoration:underline;text-underline-offset:3px;text-decoration-thickness:1.5px;">000013</div>
<div class="t" id="d5_2" style="top:1660.74px;font-size:27px;line-height:27px;font-weight:400;color:#252423;letter-spacing:-0.128px;left:1268.80px;">000013: 7/24/2025</div>
<div class="t" id="d6_0" style="top:1712.64px;font-size:27px;line-height:27px;font-weight:400;color:#252423;letter-spacing:-0.350px;left:707.80px;">Facility Condition Assessments</div>
<div class="t" id="d6_1" style="top:1712.64px;font-size:27px;line-height:27px;font-weight:400;color:#252423;letter-spacing:-0.350px;left:1119.00px;text-decoration:underline;text-underline-offset:3px;text-decoration-thickness:1.5px;">000014</div>
<div class="t" id="d6_2" style="top:1712.64px;font-size:27px;line-height:27px;font-weight:400;color:#252423;letter-spacing:-0.350px;left:1267.20px;">000014: 9/30/2025</div>
<div class="t" id="d6_3" style="top:1712.64px;font-size:27px;line-height:27px;font-weight:400;color:#252423;letter-spacing:-0.350px;left:1801.80px;">Corporate Office FCA</div>
<div class="t" id="d6_4" style="top:1712.64px;font-size:27px;line-height:27px;font-weight:400;color:#252423;letter-spacing:-0.350px;left:2318.00px;">Property was bought as part of f</div>
</div>
<div class="r" style="left:698px;top:1397.5px;width:2413px;height:2px;background:#E4E4E4"></div>
<div class="r" style="left:698px;top:1449.6px;width:2413px;height:2px;background:#E4E4E4"></div>
<div class="r" style="left:698px;top:1503.2px;width:2413px;height:2px;background:#E4E4E4"></div>
<div class="r" style="left:698px;top:1555.5px;width:2413px;height:2px;background:#E4E4E4"></div>
<div class="r" style="left:698px;top:1644.3px;width:2413px;height:2px;background:#E4E4E4"></div>
<div class="r" style="left:698px;top:1696.3px;width:2413px;height:2px;background:#E4E4E4"></div>
<div class="r" style="left:1108px;top:1275px;width:2px;height:442.5px;background:#E4E4E4"></div>
<div class="r" style="left:1256px;top:1275px;width:2px;height:442.5px;background:#E4E4E4"></div>
<div class="r" style="left:1793px;top:1275px;width:2px;height:442.5px;background:#E4E4E4"></div>
<div class="r" style="left:2306px;top:1275px;width:2px;height:442.5px;background:#E4E4E4"></div>
<div class="r" style="left:2803px;top:1275px;width:2px;height:442.5px;background:#E4E4E4"></div>
</body></html>
